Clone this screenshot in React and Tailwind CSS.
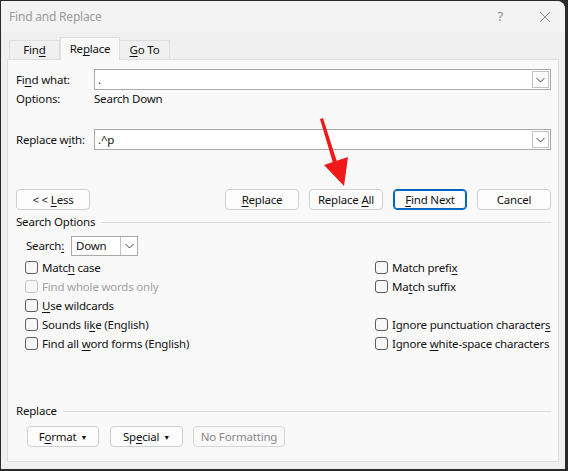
import React from "react";

const font = { fontFamily: '"Noto Sans", "Open Sans", sans-serif' };

function U({ children }) {
  return <span className="underline underline-offset-2">{children}</span>;
}

function Chevron() {
  return (
    <svg width="9" height="6" viewBox="0 0 9 6">
      <path d="M0.5 1 L4.5 5 L8.5 1" fill="none" stroke="#444" strokeWidth="1" />
    </svg>
  );
}

function Combo({ value, className }) {
  return (
    <div className={`flex h-[21px] items-stretch border border-[#a9a9a9] bg-white ${className}`}>
      <div className="flex-1 pl-[3px] leading-[19px]">{value}</div>
      <div className="my-[1px] mr-[1px] flex w-[17px] items-center justify-center border border-[#c2c2c2] bg-white">
        <Chevron />
      </div>
    </div>
  );
}

function Btn({ children, className = "", primary = false }) {
  return (
    <div
      className={`flex h-[21px] items-center justify-center whitespace-nowrap rounded-[4px] border bg-[#fdfdfd] ${
        primary ? "border-[#0067c0] shadow-[inset_0_0_0_1px_#0067c0]" : "border-[#cfcfcf]"
      } ${className}`}
    >
      <span>{children}</span>
    </div>
  );
}

function Check({ label, disabled = false }) {
  return (
    <div className={`flex h-[19px] items-center gap-[4px] whitespace-nowrap ${disabled ? "text-[#a2a2a2]" : "text-[#111]"}`}>
      <div
        className={`h-[13px] w-[13px] shrink-0 rounded-[3px] border bg-[#f7f7f7] ${
          disabled ? "border-[#c6c6c6]" : "border-[#5e5e5e]"
        }`}
      />
      <span>{label}</span>
    </div>
  );
}

function Caret() {
  return <span className="ml-[4px] inline-block align-middle text-[7px]">▼</span>;
}

export default function App() {
  return (
    <div
      className="relative h-[471px] w-[568px] bg-[#2a2a2a] pl-[1px] pr-[3px] pt-[1px] pb-[2px] text-[11.5px] tracking-[-0.2px] text-[#111]"
      style={font}
    >
      <div className="flex h-full flex-col rounded-tr-[8px] bg-[#f0f0f0]">
        {/* Title bar */}
        <div className="flex h-[31px] items-center rounded-tr-[8px] bg-[#f3f3f3] pl-[8px]">
          <span className="text-[12px] text-[#9b9b9b]">Find and Replace</span>
          <span className="ml-auto text-[13px] text-[#8a8a8a]">?</span>
          <svg className="ml-[36px] mr-[14px]" width="12" height="12" viewBox="0 0 12 12">
            <path d="M1 1 L11 11 M11 1 L1 11" stroke="#8a8a8a" strokeWidth="1" />
          </svg>
        </div>

        {/* Tabs */}
        <div className="mt-[6px] flex h-[21px] items-end pl-[8px]">
          <div className="flex h-[19px] w-[51px] items-center justify-center border border-b-0 border-[#dedede] bg-[#f0f0f0]">
            <span>Fin<U>d</U></span>
          </div>
          <div className="relative z-10 -mb-[1px] flex h-[23px] w-[60px] items-center justify-center border border-b-0 border-[#dedede] bg-[#f9f9f9]">
            <span>Re<U>p</U>lace</span>
          </div>
          <div className="flex h-[19px] w-[50px] items-center justify-center border border-b-0 border-l-0 border-[#dedede] bg-[#f0f0f0]">
            <span><U>G</U>o To</span>
          </div>
        </div>

        {/* Panel */}
        <div className="ml-[6px] mr-[6px] flex h-[403px] flex-col border border-[#dedede] bg-[#f9f9f9] pl-[8px] pr-[6px] pt-[9px]">
          <div className="flex h-[21px] items-center">
            <div className="w-[78px]">Fi<U>n</U>d what:</div>
            <Combo value="." className="w-[457px]" />
          </div>
          <div className="flex h-[18px] items-center">
            <div className="w-[78px]">Options:</div>
            <div>Search Down</div>
          </div>
          <div className="mt-[21px] flex h-[21px] items-center">
            <div className="w-[78px]">Replace w<U>i</U>th:</div>
            <Combo value=".^p" className="w-[457px]" />
          </div>

          <div className="mt-[39px] flex w-[535px] items-center">
            <Btn className="w-[74px]">
              &lt; &lt; <U>L</U>ess
            </Btn>
            <div className="ml-auto flex gap-[10px]">
              <Btn className="w-[74px]">
                <U>R</U>eplace
              </Btn>
              <Btn className="w-[74px]">
                Replace <U>A</U>ll
              </Btn>
              <Btn className="w-[74px]" primary>
                <U>F</U>ind Next
              </Btn>
              <Btn className="w-[74px]">Cancel</Btn>
            </div>
          </div>

          <div className="mt-[4px] flex h-[16px] w-[535px] items-center gap-[6px]">
            <span>Search Options</span>
            <div className="h-px flex-1 bg-[#dcdcdc]" />
          </div>

          <div className="mt-[6px] flex h-[20px] items-center pl-[10px]">
            <div className="w-[45px]">
              Search<U>:</U>
            </div>
            <div className="flex h-[20px] w-[67px] items-stretch border border-[#a9a9a9] bg-white">
              <div className="flex-1 pl-[4px] leading-[18px]">Down</div>
              <div className="flex w-[17px] items-center justify-center border-l border-[#c2c2c2]">
                <Chevron />
              </div>
            </div>
          </div>

          <div className="mt-[2px] grid grid-cols-[350px_1fr] pl-[9px]">
            <div className="flex flex-col">
              <Check label={<>Matc<U>h</U> case</>} />
              <Check label="Find whole words only" disabled />
              <Check label={<><U>U</U>se wildcards</>} />
              <Check label={<>Sounds li<U>k</U>e (English)</>} />
              <Check label={<>Find all <U>w</U>ord forms (English)</>} />
            </div>
            <div className="flex flex-col">
              <Check label={<>Match prefi<U>x</U></>} />
              <Check label={<>Ma<U>t</U>ch suffix</>} />
              <div className="h-[19px]" />
              <Check label={<>Ignore punctuation character<U>s</U></>} />
              <Check label={<>Ignore <U>w</U>hite-space characters</>} />
            </div>
          </div>

          <div className="mt-[50px] flex h-[16px] w-[535px] items-center gap-[6px]">
            <span>Replace</span>
            <div className="h-px flex-1 bg-[#dcdcdc]" />
          </div>

          <div className="mt-[7px] flex items-center pl-[11px]">
            <Btn className="w-[72px]">
              F<U>o</U>rmat<Caret />
            </Btn>
            <Btn className="ml-[11px] w-[73px]">
              Sp<U>e</U>cial<Caret />
            </Btn>
            <div className="ml-[10px] flex h-[21px] w-[92px] items-center justify-center whitespace-nowrap rounded-[4px] border border-[#d6d6d6] bg-[#f9f9f9] text-[#8a8a8a]">
              No Formatting
            </div>
          </div>
        </div>
      </div>

      {/* Red annotation arrow */}
      <svg className="pointer-events-none absolute left-0 top-0" width="568" height="471">
        <path d="M320 119 L323 118 L337 162 L333 163 Z" fill="#f01818" />
        <path d="M324 165 L348 157 L344 186 Z" fill="#f01818" />
      </svg>
    </div>
  );
}
